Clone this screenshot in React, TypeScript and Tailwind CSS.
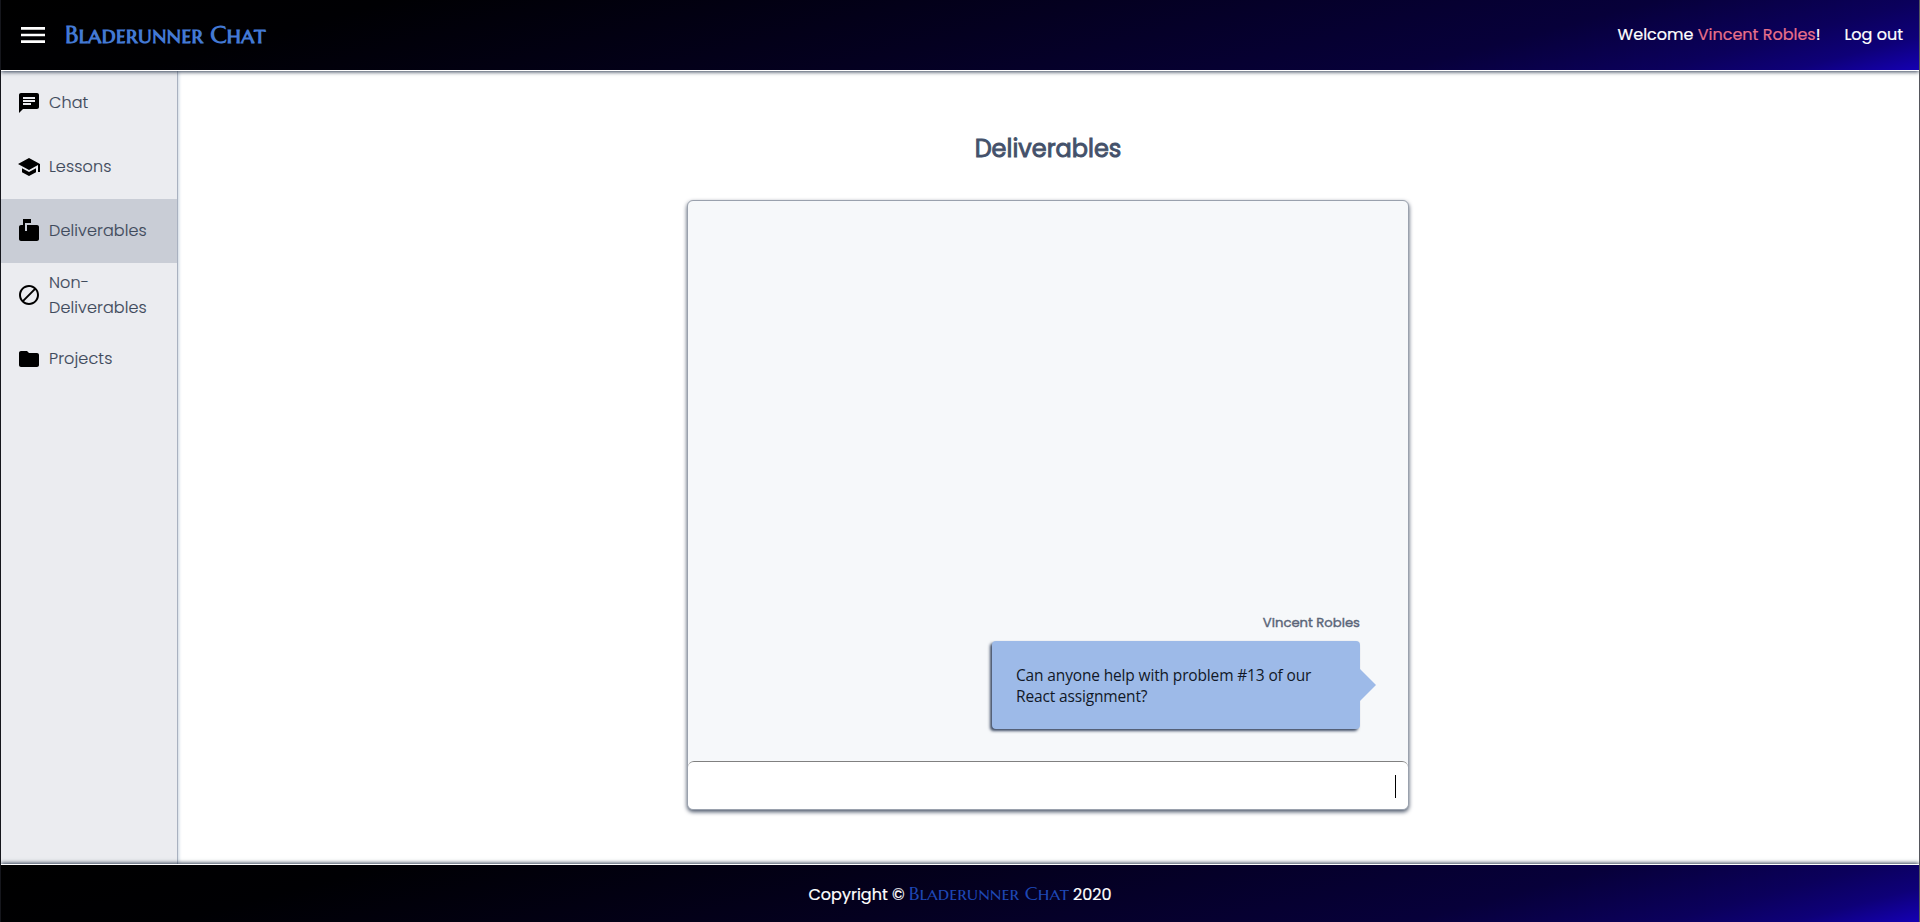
import { MdMenu, MdChat, MdSchool, MdMarkunreadMailbox, MdDoNotDisturbAlt, MdFolder } from "react-icons/md";

const gradient =
  "bg-[linear-gradient(165deg,#000000_0%,#000003_18%,#040020_50%,#07003a_76%,#0b005c_88%,#0e0078_94%,#1500b4_100%)]";
const sans = "font-[Poppins,Inter,sans-serif]";
const brand = "font-['Marcellus_SC','Liberation_Serif',serif]";

const items = [
  { label: "Chat", Icon: MdChat },
  { label: "Lessons", Icon: MdSchool },
  { label: "Deliverables", Icon: MdMarkunreadMailbox, active: true },
  { label: "Non-Deliverables", Icon: MdDoNotDisturbAlt },
  { label: "Projects", Icon: MdFolder },
];

function Header() {
  return (
    <header className={`relative z-10 flex h-[71px] shrink-0 items-center border-b border-white pr-4 pl-4 text-white shadow-[0_1px_4px_#334155] ${gradient} bg-origin-border`}>
      <MdMenu className="h-8 w-8" />
      <h1 className={`ml-4 text-2xl leading-8 font-bold text-[#4379d4] ${brand}`}>
        Bladerunner Chat
      </h1>
      <p className="ml-auto text-base [-webkit-text-stroke:0.2px]">
        Welcome <span className="text-[#e8708a]">Vincent Robles</span>!
      </p>
      <a className="ml-6 text-base [-webkit-text-stroke:0.2px]">Log out</a>
    </header>
  );
}

function Sidebar() {
  return (
    <nav className="w-[177px] shrink-0 border-r border-[#a9b1c0] bg-[#ebecf0] shadow-[1px_0_3px_#cbd5e1]">
      {items.map(({ label, Icon, active }) => (
        <div key={label} className={`flex h-16 items-center pl-4 ${active ? "bg-[#c9cdd6]" : ""}`}>
          <Icon className="size-6 shrink-0 text-black" />
          <span className="ml-2 w-[110px] pb-px text-base leading-[25px] font-light tracking-[0.12px] text-[#3f4a5c] [-webkit-text-stroke:0.15px]">{label}</span>
        </div>
      ))}
    </nav>
  );
}

function ChatPanel() {
  return (
    <section className="mr-px flex h-[610px] w-[722px] flex-col rounded-md border border-[#9aa1ad] bg-[#f6f8fa] shadow-[0_2px_4px_#4a5568]">
      <div className="flex flex-1 flex-col items-end justify-end pr-12 pb-8">
        <p className="text-[13.2px] leading-5 text-[#5a6578] [-webkit-text-stroke:0.4px]">Vincent Robles</p>
        <div className="relative mt-2 h-[88px] w-[368px] rounded bg-[#9dbae8] pt-6 pl-6 shadow-[-2px_2px_3px_#3c4a63]">
          <p className="w-[310px] font-['Segoe_UI','Open_Sans',sans-serif] text-[15.5px] leading-[21px] tracking-[-0.15px] text-[#111827]">
            Can anyone help with problem #13 of our React assignment?
          </p>
          <span className="absolute top-7 left-full border-y-16 border-l-16 border-y-transparent border-l-[#9dbae8]" />
        </div>
      </div>
      <div className="flex h-12 items-center justify-end rounded-md border-t border-[#808080] bg-white pr-3">
        <span className="mt-px h-[23px] w-px bg-black" />
      </div>
    </section>
  );
}

export default function App() {
  return (
    <div className={`flex h-[922px] w-[1920px] flex-col overflow-hidden border-r border-l border-r-[#55565c] border-l-[#15161c] bg-white ${sans}`}>
      <Header />
      <div className="flex min-h-0 flex-1">
        <Sidebar />
        <main className="flex flex-1 flex-col items-center pt-[60px]">
          <h2 className="mb-[33px] pr-px text-2xl leading-9 text-[#44516a] [-webkit-text-stroke:0.9px_#44516a]">Deliverables</h2>
          <ChatPanel />
        </main>
      </div>
      <footer className={`relative z-10 flex h-[58px] shrink-0 items-center justify-center gap-[4px] border-t border-white text-base text-white shadow-[0_-1px_4px_#334155] ${gradient}`}>
        <span className="pt-0.5 [-webkit-text-stroke:0.2px]">Copyright ©</span>
        <span className={`text-[19.2px] font-normal text-[#1e47b4] ${brand}`}>Bladerunner Chat</span>
        <span className="pt-0.5 [-webkit-text-stroke:0.2px]">2020</span>
      </footer>
    </div>
  );
}
